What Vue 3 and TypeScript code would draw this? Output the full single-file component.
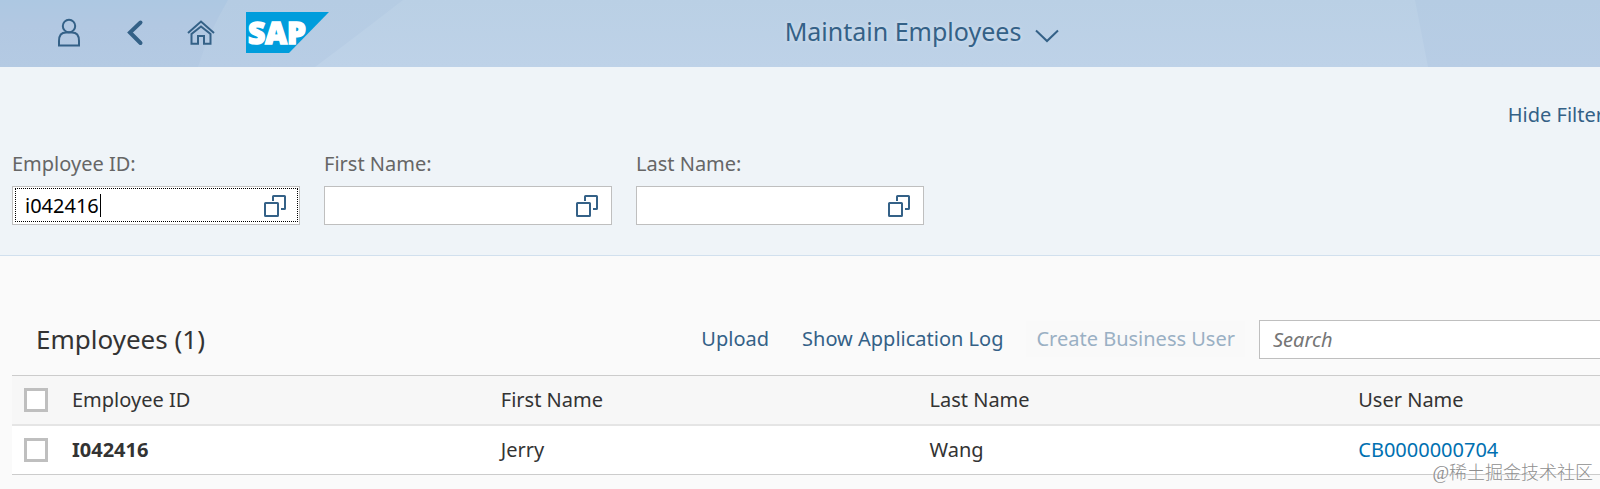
<script setup lang="ts">
import { ref } from 'vue'

interface Filter {
  id: string
  label: string
  value: string
  focused: boolean
}

interface Employee {
  id: string
  firstName: string
  lastName: string
  userName: string
  selected: boolean
}

const filters = ref<Filter[]>([
  { id: 'filter-employee-id', label: 'Employee ID:', value: 'i042416', focused: true },
  { id: 'filter-first-name', label: 'First Name:', value: '', focused: false },
  { id: 'filter-last-name', label: 'Last Name:', value: '', focused: false },
])

const employees = ref<Employee[]>([
  { id: 'I042416', firstName: 'Jerry', lastName: 'Wang', userName: 'CB0000000704', selected: false },
])

const search = ref('')
const allSelected = ref(false)

function toggleAll() {
  employees.value.forEach((e) => (e.selected = allSelected.value))
}
</script>

<template>
  <div class="page">
    <header class="shell">
      <svg class="shell-bg" viewBox="0 0 1600 67" preserveAspectRatio="none" aria-hidden="true">
        <defs>
          <linearGradient id="shade-a" x1="0" y1="0" x2="0" y2="1">
            <stop offset="0" stop-color="#adc8e2" />
            <stop offset="0.4" stop-color="#b2c8e2" />
            <stop offset="1" stop-color="#b4cae3" />
          </linearGradient>
          <linearGradient id="shade-b" x1="0" y1="0" x2="0" y2="1">
            <stop offset="0" stop-color="#b5cce3" />
            <stop offset="1" stop-color="#b8cde5" />
          </linearGradient>
          <linearGradient id="shade-c" x1="0" y1="0" x2="0" y2="1">
            <stop offset="0" stop-color="#bad0e5" />
            <stop offset="1" stop-color="#bed2e8" />
          </linearGradient>
        </defs>
        <rect width="1600" height="67" fill="url(#shade-b)" />
        <path d="M0 0H228Q208 34 198 67H0Z" fill="url(#shade-a)" />
        <path d="M403 0H1415L1428 67H315Q354 38 403 0Z" fill="url(#shade-c)" />
      </svg>
      <div class="shell-left">
        <button class="shell-btn" aria-label="User">
          <svg width="24" height="30" viewBox="0 0 24 30">
            <circle cx="12" cy="8" r="6.2" />
            <path d="M2 27.5V23Q2 14.6 9 14.6H15Q22 14.6 22 23V27.5Z" />
          </svg>
        </button>
        <button class="shell-btn" aria-label="Back">
          <svg width="24" height="30" viewBox="0 0 24 30">
            <path class="heavy" d="M17.5 4.5L7 14.500L17.5 25" />
          </svg>
        </button>
        <button class="shell-btn" aria-label="Home">
          <svg width="28" height="30" viewBox="0 0 28 30">
            <path d="M1 15L14 3.500L27 15" />
            <path d="M4.500 16V25.800H11V18H17V25.800H23.500V16L14 8.500Z" />
          </svg>
        </button>
        <svg class="logo" width="83" height="41" viewBox="0 0 83 41" role="img" aria-label="SAP">
          <path d="M0 0H83L43 41H0Z" fill="#009ddc" />
          <text x="2" y="32">SAP</text>
        </svg>
      </div>
      <button class="shell-title">
        <span>Maintain Employees</span>
        <svg width="24" height="14" viewBox="0 0 24 14"><path d="M1 1.500L12 12L23 1.500" /></svg>
      </button>
    </header>

    <section class="filter-bar">
      <div class="filter-actions">
        <button class="link-btn">Hide Filter</button>
      </div>
      <div class="filters">
        <div v-for="f in filters" :key="f.id" class="field">
          <label :for="f.id">{{ f.label }}</label>
          <div class="box" :class="{ focused: f.focused }">
            <input :id="f.id" v-model="f.value" type="text" autocomplete="off" />
            <span v-if="f.focused" class="caret"></span>
            <button class="help" :aria-label="'Value help ' + f.label">
              <svg width="22" height="22" viewBox="0 0 22 22">
                <path d="M9 6V1.500Q9 1 9.500 1H20.500Q21 1 21 1.500V13.500Q21 14 20.500 14H17" />
                <rect x="1" y="8" width="13" height="13" rx="0.5" />
              </svg>
            </button>
          </div>
        </div>
      </div>
    </section>

    <main class="content">
      <div class="toolbar">
        <h1>Employees (1)</h1>
        <div class="actions">
          <button class="link-btn">Upload</button>
          <button class="link-btn">Show Application Log</button>
          <button class="link-btn" disabled>Create Business User</button>
        </div>
        <input v-model="search" class="search" type="search" placeholder="Search" aria-label="Search" />
      </div>

      <table>
        <thead>
          <tr>
            <th class="check">
              <input v-model="allSelected" type="checkbox" aria-label="Select all" @change="toggleAll" />
            </th>
            <th>Employee ID</th>
            <th>First Name</th>
            <th>Last Name</th>
            <th class="last">User Name</th>
          </tr>
        </thead>
        <tbody>
          <tr v-for="e in employees" :key="e.id">
            <td class="check">
              <input v-model="e.selected" type="checkbox" :aria-label="'Select ' + e.id" />
            </td>
            <td class="key">{{ e.id }}</td>
            <td>{{ e.firstName }}</td>
            <td>{{ e.lastName }}</td>
            <td><a href="#">{{ e.userName }}</a></td>
          </tr>
        </tbody>
      </table>
    </main>
    <div class="watermark">@稀土掘金技术社区</div>
  </div>
</template>

<style>
body {
  background: #fafafa;
}
</style>

<style scoped>
.page {
  position: relative;
  min-height: 100vh;
  overflow: hidden;
  color: #333;
  font-family: "Noto Sans", "Liberation Sans", sans-serif;
  font-size: 20px;
  line-height: 28px;
}

.page *,
.page {
  box-sizing: border-box;
}

button,
input {
  margin: 0;
  padding: 0;
  border: 0;
  background: none;
  color: inherit;
  font: inherit;
}

.shell {
  position: relative;
  display: flex;
  align-items: center;
  height: 67px;
  color: #346187;
}

.shell-bg {
  position: absolute;
  inset: 0;
  width: 100%;
  height: 100%;
}

.shell-left {
  position: relative;
  display: flex;
  flex: 1;
  align-items: center;
  padding: 0 0 2px 36px;
}

.shell-btn {
  display: flex;
  align-items: center;
  justify-content: center;
  width: 66px;
  height: 48px;
}

.shell-btn svg,
.shell-title svg,
.help svg {
  fill: none;
  stroke: #346187;
  stroke-width: 2;
}

.shell-btn svg .heavy {
  stroke-width: 4;
  stroke-linecap: round;
}

.logo {
  margin-left: 12px;
}

.logo text {
  fill: #fff;
  stroke: #fff;
  stroke-width: 1.5;
  font-family: "Open Sans", "Noto Sans", sans-serif;
  font-size: 30px;
  font-weight: 800;
}

.shell-title {
  position: relative;
  display: flex;
  align-items: center;
  gap: 14px;
  padding-bottom: 6px;
  font-size: 25px;
  line-height: 36px;
  text-shadow: 0 0 4px rgba(255, 255, 255, 0.5);
}

.shell::after {
  content: "";
  flex: 1;
  margin-right: -208px;
}

.shell-title svg {
  margin-top: 10px;
}

.filter-bar {
  padding: 32px 12px 30px;
  border-bottom: 1px solid #d1e0ee;
  background: #eff4f8;
}

.filter-actions {
  display: flex;
  justify-content: flex-end;
  margin-right: -16px;
}

.link-btn {
  color: #346187;
  line-height: 32px;
  white-space: nowrap;
}

.filters {
  display: flex;
  gap: 24px;
  padding-top: 19px;
}

.field {
  width: 288px;
}

.field label {
  display: block;
  margin-bottom: 8px;
  color: #666;
}

.box {
  position: relative;
  display: flex;
  height: 39px;
  border: 1px solid #bfbfbf;
  background: #fff;
}

.box.focused::after {
  content: "";
  position: absolute;
  inset: 1px 1px 2px 2px;
  border: 1px dotted #000;
  pointer-events: none;
}

.box input {
  flex: 1;
  min-width: 0;
  padding-left: 12px;
  outline: none;
  color: #000;
}

.caret {
  position: absolute;
  top: 7px;
  left: 87px;
  width: 1px;
  height: 23px;
  background: #000;
}

.help {
  display: flex;
  align-items: center;
  justify-content: center;
  width: 48px;
}

.content {
  padding: 59px 0 0 12px;
}

.toolbar {
  display: flex;
  align-items: center;
  height: 48px;
  margin: 0 -1px 12px 24px;
}

h1 {
  flex: 1;
  margin: 0;
  font-size: 26px;
  font-weight: 400;
  line-height: 36px;
}

.actions {
  display: flex;
  gap: 13px;
  margin-right: 14px;
}

.actions .link-btn {
  height: 36px;
  padding: 0 10px;
}

.actions .link-btn:disabled {
  background: #f9f9f9;
  color: #9ab0c4;
}

.search {
  width: 342px;
  height: 39px;
  padding-left: 13px;
  border: 1px solid #bfbfbf;
  background: #fff;
  appearance: none;
}

.search::placeholder {
  color: #757575;
  font-style: italic;
  opacity: 1;
}

table {
  width: 100%;
  border-collapse: collapse;
  table-layout: fixed;
}

th,
td {
  width: 27%;
  height: 49px;
  padding: 0;
  font-weight: 400;
  text-align: left;
}

th {
  border-top: 1px solid #ccc;
  border-bottom: 2px solid #e5e5e5;
  background: #f7f7f7;
}

td {
  height: 50px;
  border-bottom: 1px solid #ccc;
  background: #fff;
}

th.last {
  width: auto;
}

.check {
  width: 60px;
  padding-left: 12px;
}

.check input {
  display: block;
  width: 24px;
  height: 24px;
  border: 3px solid #bfbfbf;
  background: #fff;
  appearance: none;
}

.check input:checked {
  background: #346187;
}

.key {
  font-weight: 700;
}

a {
  color: #0070b1;
  text-decoration: none;
}

.watermark {
  position: absolute;
  right: 7px;
  bottom: 2px;
  color: #8f8f8f;
  font-family: "Liberation Serif", "Noto Sans CJK SC", serif;
  font-size: 18px;
  font-weight: 300;
  text-shadow: 0 0 2px #fff;
}
</style>
